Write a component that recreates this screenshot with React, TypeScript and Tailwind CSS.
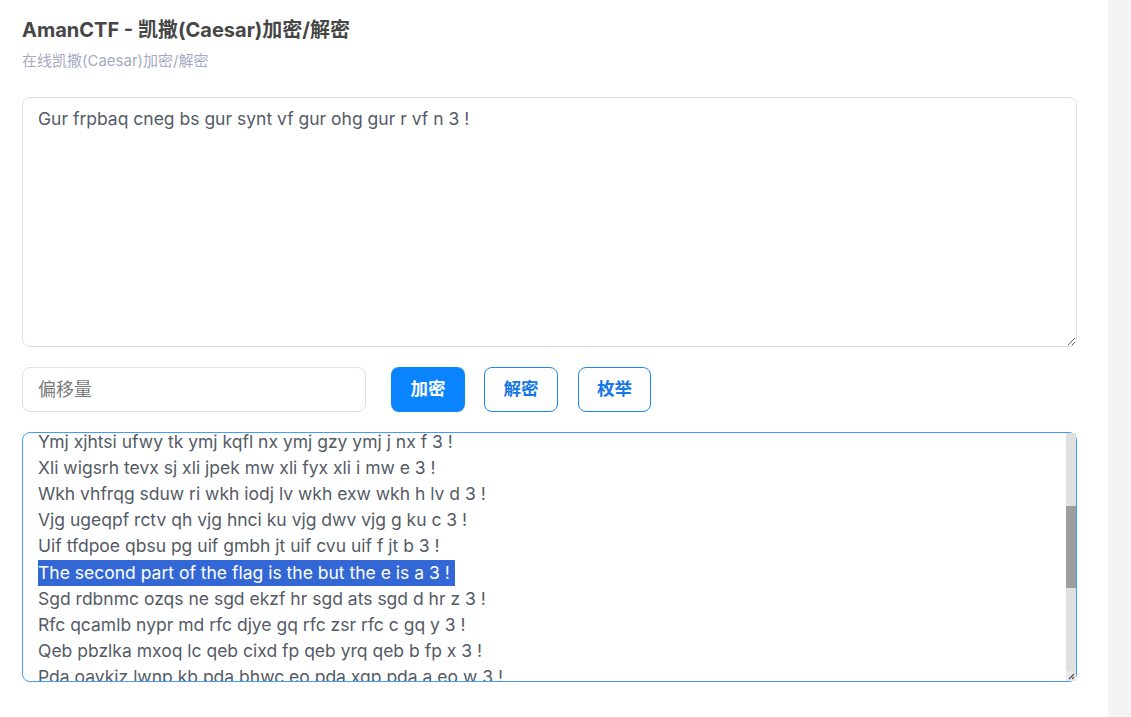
import React, { useEffect, useRef } from "react";

const CIPHER = "Gur frpbaq cneg bs gur synt vf gur ohg gur r vf n 3 !";

function shift(s: string, k: number) {
  return s.replace(/[a-zA-Z]/g, (c) => {
    const base = c <= "Z" ? 65 : 97;
    return String.fromCharCode(((c.charCodeAt(0) - base - k + 26 * 2) % 26) + base);
  });
}

export default function App() {
  const ref = useRef<HTMLDivElement>(null);
  const lines: string[] = [];
  for (let k = 0; k < 26; k++) lines.push(shift(CIPHER, k));
  useEffect(() => {
    if (ref.current) ref.current.scrollTop = 222;
  }, []);
  return (
    <div className="flex min-h-[717px] w-full" style={{ fontFamily: "Inter, 'Noto Sans CJK SC', sans-serif" }}>
      <div className="w-[1108px] shrink-0 bg-white pl-[22px] pr-[31px] pt-[16px]">
        <h1 className="text-[20px] leading-[28px] font-bold text-[#464646]">AmanCTF - 凯撒(Caesar)加密/解密</h1>
        <p className="mt-[7px] text-[15px] leading-[20px] text-[#a6a9c4]">在线凯撒(Caesar)加密/解密</p>
        <textarea
          className="mt-[26px] block h-[250px] w-full rounded-[8px] border border-[#dcdfe6] px-[15px] py-[8px] text-[17.5px] leading-[26.2px] text-[#555b66] outline-none"
          defaultValue={CIPHER}
        />
        <div className="mt-[20px] flex items-center">
          <input
            className="h-[45px] w-[344px] rounded-[8px] border border-[#dcdfe6] px-[15px] text-[18px] text-[#606266] outline-none placeholder:text-[#7a7a7a]"
            placeholder="偏移量"
          />
          <button className="ml-[25px] h-[45px] w-[74px] rounded-[8px] bg-[#0a84ff] text-[17.5px] font-bold text-white">加密</button>
          <button className="ml-[19px] h-[45px] w-[74px] rounded-[8px] border border-[#1f86f0] bg-white text-[17.5px] font-bold text-[#1677e6]">解密</button>
          <button className="ml-[20px] h-[45px] w-[73px] rounded-[8px] border border-[#1f86f0] bg-white text-[17.5px] font-bold text-[#1677e6]">枚举</button>
        </div>
        <div className="relative mt-[20px]">
          <div
            ref={ref}
            className="h-[250px] w-full overflow-hidden rounded-[8px] border border-[#409eff] px-[15px] py-[8px] text-[17.5px] leading-[26.2px] text-[#555b66] whitespace-pre"
          >
            {lines.map((l, i) => (
              <div key={i}>
                {i === 13 ? <span className="inline-block bg-[#3367d6] pr-[5px] text-white">{l}</span> : l}
              </div>
            ))}
            <div>{"\u00a0"}</div>
          </div>
          <div className="absolute right-[1px] top-[1px] flex h-[248px] w-[10px] flex-col bg-[#e0e0e0]">
            <div className="h-[73px]" />
            <div className="h-[82px] bg-[#9e9e9e]" />
            <div className="flex-1" />
            <svg width="10" height="10" viewBox="0 0 10 10" className="bg-[#e8e8e8]">
              <path d="M8 3 L3 8 M8 6 L6 8" stroke="#555" strokeWidth="1.2" />
            </svg>
          </div>
        </div>
      </div>
      <div className="flex-1 bg-[#f2f3f5]" />
    </div>
  );
}
